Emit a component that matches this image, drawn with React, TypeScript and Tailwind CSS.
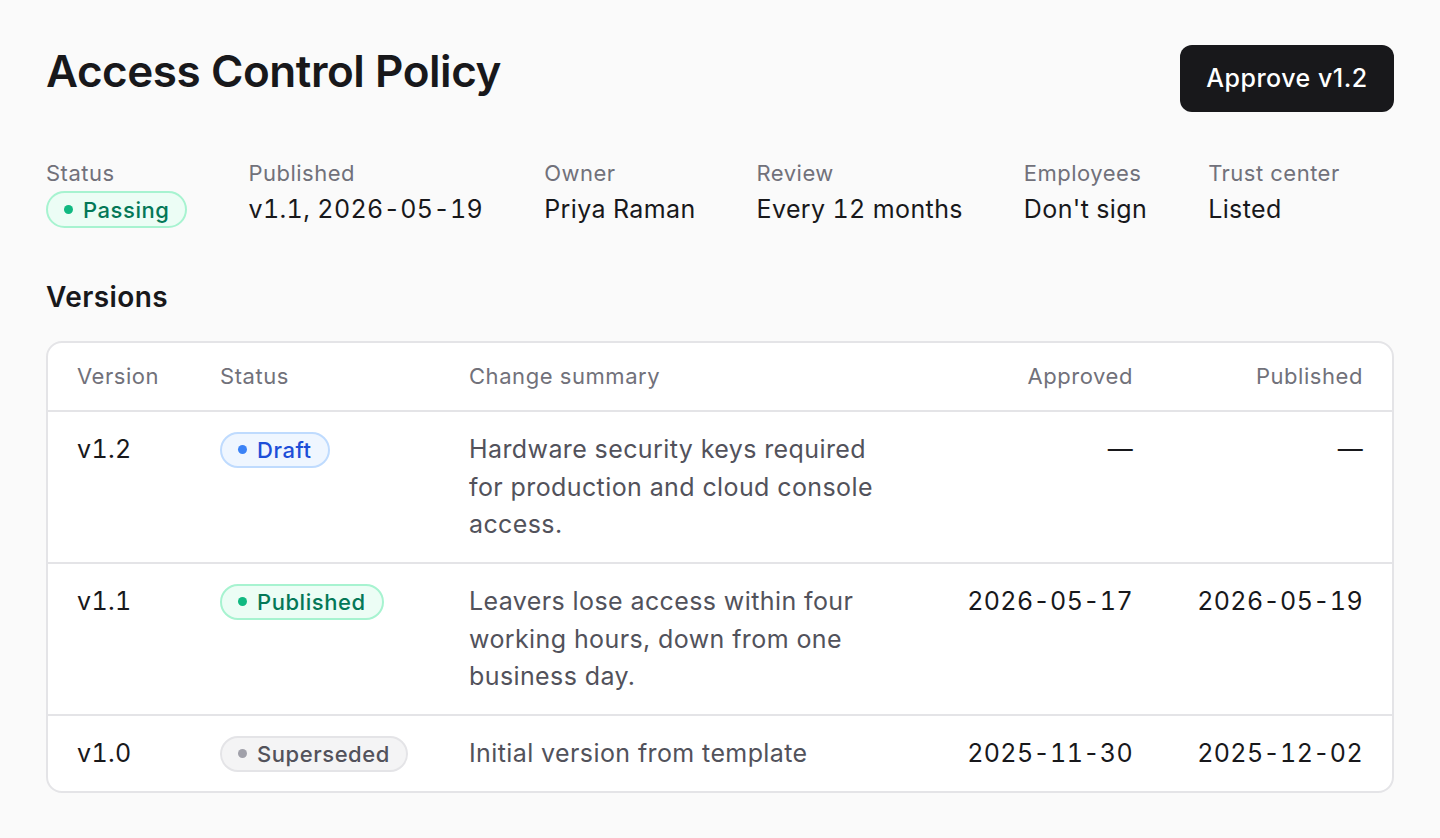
import React from "react";

type Tone = "green" | "blue" | "gray";

function Badge({ tone, label, big }: { tone: Tone; label: string; big?: boolean }) {
  const tones: Record<Tone, { wrap: string; dot: string }> = {
    green: { wrap: "bg-[#ecfdf5] border-[#a7f3d0] text-[#047857]", dot: "bg-[#10b981]" },
    blue: { wrap: "bg-[#eff6ff] border-[#bfdbfe] text-[#1d4ed8]", dot: "bg-[#3b82f6]" },
    gray: { wrap: "bg-[#f4f4f5] border-[#e4e4e7] text-[#52525b]", dot: "bg-[#a1a1aa]" },
  };
  const t = tones[tone];
  return (
    <span
      className={`inline-flex items-center gap-[10px] rounded-full border-2 pl-[16px] pr-[16px] text-[22px] font-medium leading-none tracking-[0.025em] ${
        big ? "h-[37px]" : "h-[36px]"
      } ${t.wrap}`}
    >
      <span className={`h-[9px] w-[9px] rounded-full ${t.dot}`} />
      {label}
    </span>
  );
}

const meta: { label: string; value?: string }[] = [
  { label: "Status" },
  { label: "Published", value: "v1.1, 2026-05-19" },
  { label: "Owner", value: "Priya Raman" },
  { label: "Review", value: "Every 12 months" },
  { label: "Employees", value: "Don't sign" },
  { label: "Trust center", value: "Listed" },
];

const rows: { v: string; tone: Tone; status: string; summary: string; approved: string; published: string }[] = [
  {
    v: "v1.2",
    tone: "blue",
    status: "Draft",
    summary: "Hardware security keys required for production and cloud console access.",
    approved: "—",
    published: "—",
  },
  {
    v: "v1.1",
    tone: "green",
    status: "Published",
    summary: "Leavers lose access within four working hours, down from one business day.",
    approved: "2026-05-17",
    published: "2026-05-19",
  },
  {
    v: "v1.0",
    tone: "gray",
    status: "Superseded",
    summary: "Initial version from template",
    approved: "2025-11-30",
    published: "2025-12-02",
  },
];

export default function App() {
  return (
    <div
      className="min-h-[838px] w-full bg-[#fafafa] px-[46px] pt-[45px] text-[#18181b]"
      style={{ fontFamily: "Inter, 'Noto Sans', sans-serif" }}
    >
      <div className="flex items-start justify-between">
        <h1 className="mt-[2px] text-[44px] font-semibold leading-[48px] tracking-[-0.01em]">Access Control Policy</h1>
        <button className="flex h-[67px] w-[214px] items-center justify-center rounded-[12px] bg-[#18181b] text-[25px] font-medium tracking-[0.02em] text-white">
          Approve v1.2
        </button>
      </div>

      <div className="mt-[46px] flex gap-[61px]">
        {meta.map((m) => (
          <div key={m.label} className="flex flex-col">
            <div className="text-[22px] leading-[30px] tracking-[0.022em] text-[#71717a]">{m.label}</div>
            <div className="mt-[3px] flex h-[37px] items-center text-[25px] tracking-[0.015em] tabular-nums">
              {m.value ? m.value : <Badge tone="green" label="Passing" big />}
            </div>
          </div>
        ))}
      </div>

      <h2 className="mt-[51px] text-[28px] font-semibold leading-[36px] tracking-[0.015em]">Versions</h2>

      <div className="mt-[26px] overflow-hidden rounded-[16px] border-2 border-[#e4e4e7] bg-white">
        <table className="w-full table-fixed border-collapse">
          <colgroup>
            <col className="w-[142px]" />
            <col className="w-[249px]" />
            <col className="w-[497px]" />
            <col className="w-[228px]" />
            <col className="w-[230px]" />
          </colgroup>
          <thead>
            <tr className="h-[68px] border-b-2 border-[#e4e4e7] text-[22px] tracking-[0.025em] text-[#71717a]">
              <th className="pl-[29px] text-left font-normal">Version</th>
              <th className="pl-[30px] text-left font-normal">Status</th>
              <th className="pl-[30px] text-left font-normal">Change summary</th>
              <th className="pr-[31px] text-right font-normal">Approved</th>
              <th className="pr-[31px] text-right font-normal">Published</th>
            </tr>
          </thead>
          <tbody>
            {rows.map((r, i) => (
              <tr key={r.v} className={i < rows.length - 1 ? "border-b-2 border-[#e4e4e7]" : ""}>
                <td className="pl-[29px] pt-[19px] pb-[18.5px] align-top text-[25px] leading-[37.5px] tracking-[0.015em] tabular-nums">
                  {r.v}
                </td>
                <td className="pl-[30px] pt-[19px] align-top">
                  <div className="flex h-[37.5px] items-center">
                    <Badge tone={r.tone} label={r.status} />
                  </div>
                </td>
                <td className="pl-[30px] pr-[45px] pt-[19px] pb-[18.5px] align-top text-[25px] leading-[37.5px] tracking-[0.016em] text-[#52525b]">
                  {r.summary}
                </td>
                <td className="pr-[31px] pt-[19px] align-top text-right text-[25px] leading-[37.5px] tracking-[0.015em] tabular-nums">
                  {r.approved}
                </td>
                <td className="pr-[31px] pt-[19px] align-top text-right text-[25px] leading-[37.5px] tracking-[0.015em] tabular-nums">
                  {r.published}
                </td>
              </tr>
            ))}
          </tbody>
        </table>
      </div>
    </div>
  );
}
